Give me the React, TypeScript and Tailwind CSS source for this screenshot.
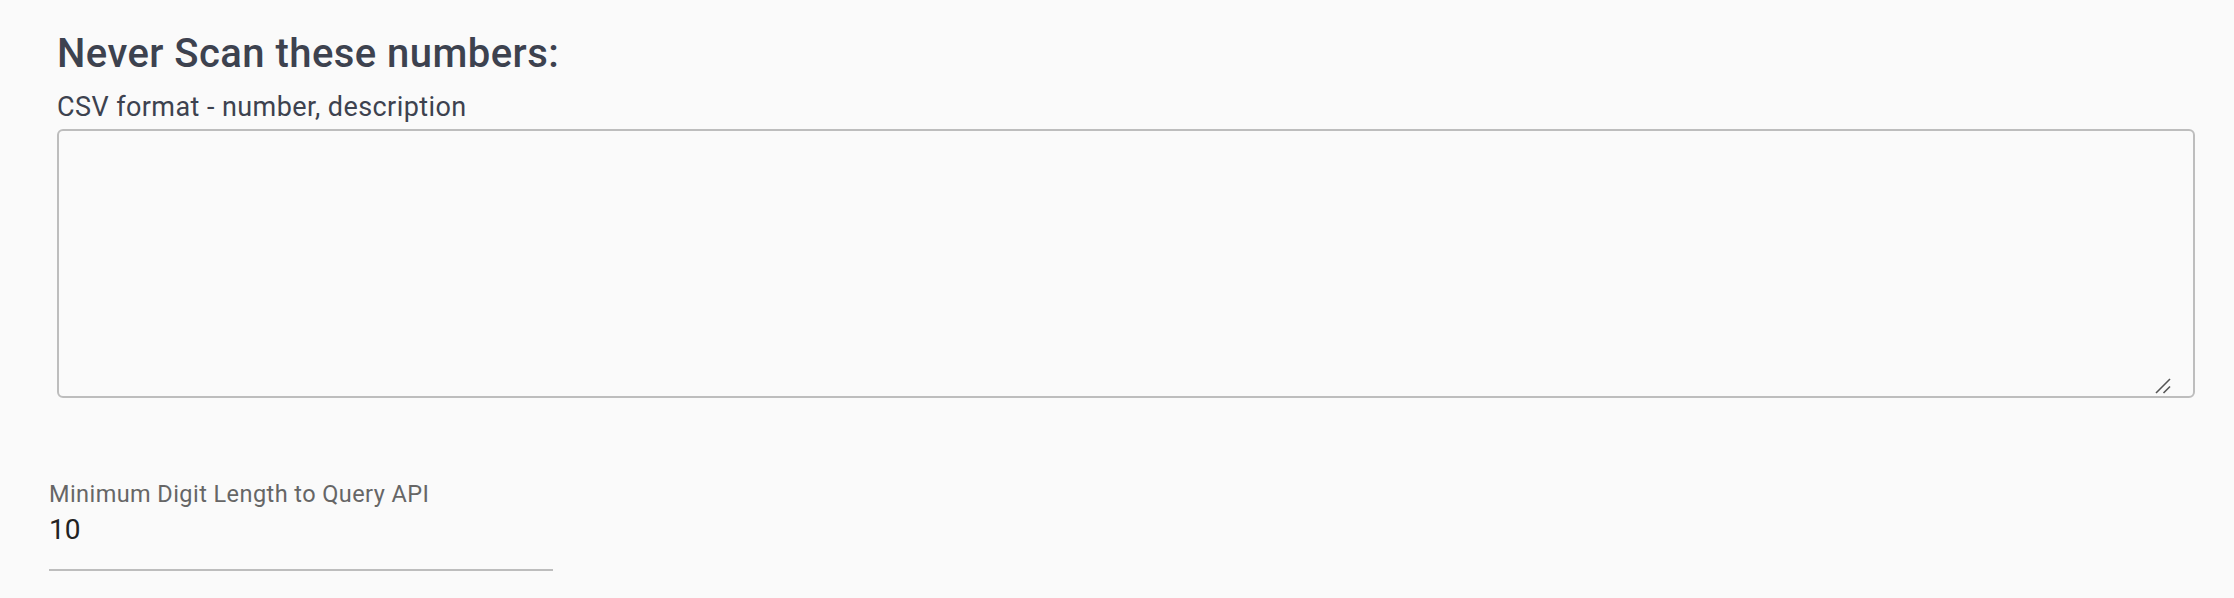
import { useState } from 'react'

export default function App() {
  const [csv, setCsv] = useState('')
  const [minDigits, setMinDigits] = useState('10')

  return (
    <div className="min-h-[598px] w-full bg-[#fafafa] font-['Roboto',sans-serif]">
      <div className="pl-[57px] pr-[39px] pt-[30px]">
        <h2 className="text-[40px] leading-[48px] font-medium tracking-[0.45px] text-[#3d424f]">
          Never Scan these numbers:
        </h2>
        <label
          htmlFor="never-scan"
          className="mt-[13px] block text-[27px] leading-[32px] tracking-[0.42px] text-[#3d424f]"
        >
          CSV format - number, description
        </label>
        <div className="relative mt-[6px]">
          <textarea
            id="never-scan"
            value={csv}
            onChange={(e) => setCsv(e.target.value)}
            className="block h-[269px] w-full resize-none rounded-[6px] border-2 border-[#bdbdbd] bg-[#fafafa] p-3 text-[24px] outline-none"
          />
          {/* resize grip */}
          <svg
            className="pointer-events-none absolute bottom-[4px] right-[24px]"
            width="16"
            height="16"
            viewBox="0 0 16 16"
          >
            <line x1="1" y1="15" x2="15" y2="1" stroke="#555" strokeWidth="1.6" />
            <line x1="8.5" y1="15" x2="15" y2="8.5" stroke="#555" strokeWidth="1.6" />
          </svg>
        </div>
      </div>

      <div className="ml-[49px] mt-[82px] w-[504px]">
        <label
          htmlFor="min-digits"
          className="block text-[23.5px] leading-[28px] tracking-[0.43px] text-[#666666]"
        >
          Minimum Digit Length to Query API
        </label>
        <input
          id="min-digits"
          value={minDigits}
          onChange={(e) => setMinDigits(e.target.value)}
          className="mt-[5px] block h-[34px] w-full bg-transparent text-[28px] leading-[34px] text-[#222222] outline-none"
        />
        <div className="mt-[22px] h-[2px] w-full bg-[#bdbdbd]" />
      </div>
    </div>
  )
}
